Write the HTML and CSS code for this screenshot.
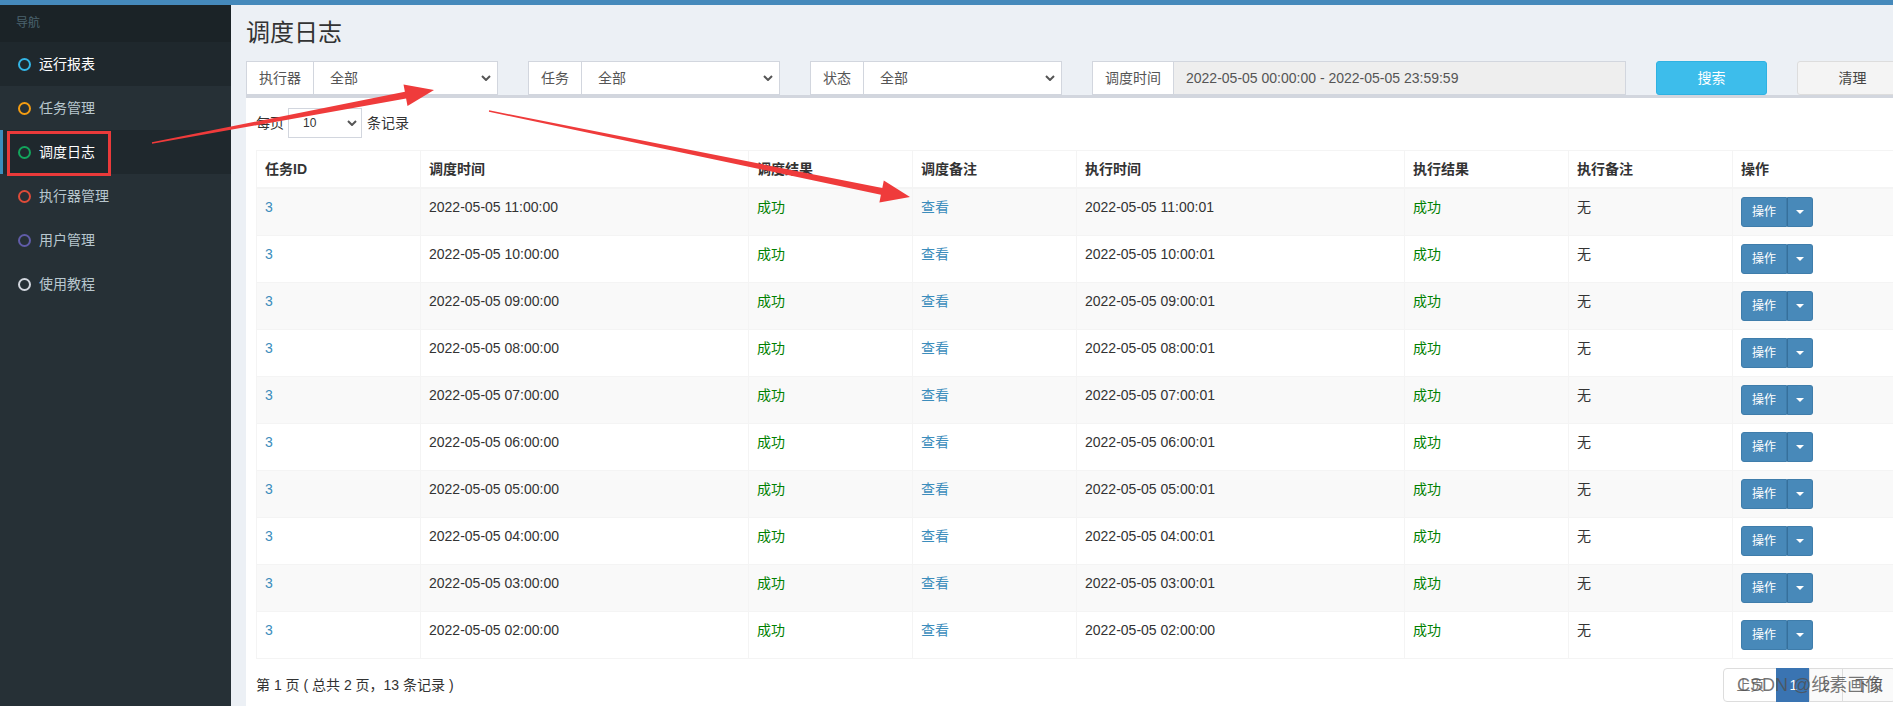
FILE: index.html
```html
<!DOCTYPE html>
<html lang="zh-CN">
<head>
<meta charset="utf-8">
<title>调度日志</title>
<link rel="stylesheet" href="styles.css">
</head>
<body>
<div class="topbar"></div>
<div class="layout">
  <aside class="sidebar">
    <div class="nav-header">导航</div>
    <ul class="menu">
      <li class="hl"><span class="dot c-aqua"></span>运行报表</li>
      <li><span class="dot c-yellow"></span>任务管理</li>
      <li class="active"><span class="dot c-green"></span>调度日志</li>
      <li><span class="dot c-red"></span>执行器管理</li>
      <li><span class="dot c-purple"></span>用户管理</li>
      <li><span class="dot c-gray"></span>使用教程</li>
    </ul>
  </aside>
  <main class="main">
    <div class="content-header"><h1>调度日志</h1></div>
    <section class="content">
      <div class="filters">
        <div class="col c2">
          <div class="input-group"><span class="addon">执行器</span><div class="select"><span>全部</span><svg class="chev" width="10" height="6" viewBox="0 0 10 6"><path d="M1 1 L5 5 L9 1" fill="none" stroke="#555" stroke-width="2"/></svg></div></div>
        </div>
        <div class="col c2">
          <div class="input-group"><span class="addon">任务</span><div class="select"><span>全部</span><svg class="chev" width="10" height="6" viewBox="0 0 10 6"><path d="M1 1 L5 5 L9 1" fill="none" stroke="#555" stroke-width="2"/></svg></div></div>
        </div>
        <div class="col c2">
          <div class="input-group"><span class="addon">状态</span><div class="select"><span>全部</span><svg class="chev" width="10" height="6" viewBox="0 0 10 6"><path d="M1 1 L5 5 L9 1" fill="none" stroke="#555" stroke-width="2"/></svg></div></div>
        </div>
        <div class="col c4">
          <div class="input-group"><span class="addon">调度时间</span><div class="readonly">2022-05-05 00:00:00 - 2022-05-05 23:59:59</div></div>
        </div>
        <div class="col c1"><button class="btn btn-info">搜索</button></div>
        <div class="col c1"><button class="btn btn-default">清理</button></div>
      </div>

      <div class="box">
        <div class="length">
          <span>每页</span>
          <div class="select sm"><span>10</span><svg class="chev" width="10" height="6" viewBox="0 0 10 6"><path d="M1 1 L5 5 L9 1" fill="none" stroke="#555" stroke-width="2"/></svg></div>
          <span>条记录</span>
        </div>
        <table class="grid">
          <colgroup>
            <col class="w10"><col class="w20"><col class="w10"><col class="w10"><col class="w20"><col class="w10"><col class="w10"><col class="w10">
          </colgroup>
          <thead>
            <tr><th>任务ID</th><th>调度时间</th><th>调度结果</th><th>调度备注</th><th>执行时间</th><th>执行结果</th><th>执行备注</th><th>操作</th></tr>
          </thead>
          <tbody>
            <tr><td class="link">3</td><td>2022-05-05 11:00:00</td><td class="ok">成功</td><td class="link">查看</td><td>2022-05-05 11:00:01</td><td class="ok">成功</td><td>无</td><td><div class="btn-group"><span class="op">操作</span><span class="tog"><i class="caret"></i></span></div></td></tr>
            <tr><td class="link">3</td><td>2022-05-05 10:00:00</td><td class="ok">成功</td><td class="link">查看</td><td>2022-05-05 10:00:01</td><td class="ok">成功</td><td>无</td><td><div class="btn-group"><span class="op">操作</span><span class="tog"><i class="caret"></i></span></div></td></tr>
            <tr><td class="link">3</td><td>2022-05-05 09:00:00</td><td class="ok">成功</td><td class="link">查看</td><td>2022-05-05 09:00:01</td><td class="ok">成功</td><td>无</td><td><div class="btn-group"><span class="op">操作</span><span class="tog"><i class="caret"></i></span></div></td></tr>
            <tr><td class="link">3</td><td>2022-05-05 08:00:00</td><td class="ok">成功</td><td class="link">查看</td><td>2022-05-05 08:00:01</td><td class="ok">成功</td><td>无</td><td><div class="btn-group"><span class="op">操作</span><span class="tog"><i class="caret"></i></span></div></td></tr>
            <tr><td class="link">3</td><td>2022-05-05 07:00:00</td><td class="ok">成功</td><td class="link">查看</td><td>2022-05-05 07:00:01</td><td class="ok">成功</td><td>无</td><td><div class="btn-group"><span class="op">操作</span><span class="tog"><i class="caret"></i></span></div></td></tr>
            <tr><td class="link">3</td><td>2022-05-05 06:00:00</td><td class="ok">成功</td><td class="link">查看</td><td>2022-05-05 06:00:01</td><td class="ok">成功</td><td>无</td><td><div class="btn-group"><span class="op">操作</span><span class="tog"><i class="caret"></i></span></div></td></tr>
            <tr><td class="link">3</td><td>2022-05-05 05:00:00</td><td class="ok">成功</td><td class="link">查看</td><td>2022-05-05 05:00:01</td><td class="ok">成功</td><td>无</td><td><div class="btn-group"><span class="op">操作</span><span class="tog"><i class="caret"></i></span></div></td></tr>
            <tr><td class="link">3</td><td>2022-05-05 04:00:00</td><td class="ok">成功</td><td class="link">查看</td><td>2022-05-05 04:00:01</td><td class="ok">成功</td><td>无</td><td><div class="btn-group"><span class="op">操作</span><span class="tog"><i class="caret"></i></span></div></td></tr>
            <tr><td class="link">3</td><td>2022-05-05 03:00:00</td><td class="ok">成功</td><td class="link">查看</td><td>2022-05-05 03:00:01</td><td class="ok">成功</td><td>无</td><td><div class="btn-group"><span class="op">操作</span><span class="tog"><i class="caret"></i></span></div></td></tr>
            <tr><td class="link">3</td><td>2022-05-05 02:00:00</td><td class="ok">成功</td><td class="link">查看</td><td>2022-05-05 02:00:00</td><td class="ok">成功</td><td>无</td><td><div class="btn-group"><span class="op">操作</span><span class="tog"><i class="caret"></i></span></div></td></tr>
          </tbody>
        </table>
        <div class="dt-footer">
          <div class="info">第 1 页 ( 总共 2 页，13 条记录 )</div>
          <ul class="pagination">
            <li class="disabled">上页</li>
            <li class="current">1</li>
            <li>2</li>
            <li>下页</li>
          </ul>
        </div>
      </div>
    </section>
  </main>
</div>

<div class="annot-box"></div>
<svg class="annot" width="1893" height="706" viewBox="0 0 1893 706">
  <polygon fill="#ef3b3b" points="152.1,143.8 406.1,98.6 407.5,106 434,90 403.5,84.4 404.9,91.8 151.9,142.3"/>
  <polygon fill="#ef3b3b" points="488.9,111.7 880.9,194.8 879.4,202.6 910,197 883.8,180.4 882.3,188 489.1,110.3"/>
</svg>
<div class="watermark">CSDN @纸素画像</div>
</body>
</html>
```

FILE: styles.css
```css
* { box-sizing: border-box; }

body {
  margin: 0;
  width: 1893px;
  height: 706px;
  overflow: hidden;
  position: relative;
  background: #ecf0f5;
  color: #333;
  font-family: "Liberation Sans", "Noto Sans CJK SC", sans-serif;
  font-size: 14px;
  line-height: 20px;
}

.topbar {
  height: 5px;
  background: #4589bb;
}

.layout {
  display: flex;
  height: 701px;
}

/* ---------- sidebar ---------- */
.sidebar {
  width: 231px;
  flex: none;
  background: #263036;
}

.nav-header {
  height: 37px;
  padding: 10px 25px 10px 16px;
  font-size: 12px;
  line-height: 17px;
  color: #4b646f;
  background: #1b2327;
}

.menu {
  list-style: none;
  margin: 0;
  padding: 0;
}

.menu li {
  height: 44px;
  padding: 12px 5px 12px 15px;
  border-left: 3px solid transparent;
  display: flex;
  align-items: center;
  color: #b8c7ce;
}

.menu li.hl {
  background: #1f282d;
  color: #fff;
}

.menu li.active {
  background: #1f282d;
  color: #fff;
  border-left-color: #3c8dbc;
}

.dot {
  width: 13px;
  height: 13px;
  border: 2px solid currentColor;
  border-radius: 50%;
  margin-right: 8px;
  flex: none;
}

.c-aqua { color: #33b5e5; }
.c-yellow { color: #f39c12; }
.c-green { color: #13a55c; }
.c-red { color: #dd4b39; }
.c-purple { color: #605ca8; }
.c-gray { color: #d2d6de; }

/* ---------- main ---------- */
.main {
  flex: none;
  width: 1722px;
}

.content-header {
  padding: 15px 15px 0;
}

.content-header h1 {
  margin: 0;
  font-size: 24px;
  line-height: 26px;
  font-weight: normal;
  color: #333;
}

.content {
  padding: 15px;
}

.filters {
  display: flex;
  margin: 0 -15px;
}

.col {
  flex: none;
  padding: 0 15px;
}

.c1 { width: 141px; }
.c2 { width: 282px; }
.c4 { width: 564px; }

.input-group {
  display: flex;
  height: 34px;
}

.addon {
  padding: 6px 12px;
  border: 1px solid #d2d6de;
  border-right: 0;
  background: #fff;
  color: #555;
  white-space: nowrap;
}

.select {
  flex: 1;
  display: flex;
  align-items: center;
  justify-content: space-between;
  border: 1px solid #d2d6de;
  background: #fff;
  padding: 0 6px 0 16px;
  color: #555;
}

.select.sm {
  flex: none;
  width: 74px;
  height: 30px;
  margin: 0 5px 0 4px;
  font-size: 12px;
  padding: 0 4px 0 14px;
  color: #333;
}

.readonly {
  flex: 1;
  border: 1px solid #d2d6de;
  background: #eee;
  padding: 6px 12px;
  color: #555;
  white-space: nowrap;
}

.btn {
  width: 100%;
  height: 34px;
  border-radius: 3px;
  font: inherit;
  padding: 6px 12px;
}

.btn-info {
  background: #3dbdeb;
  border: 1px solid #2fb2e2;
  color: #fff;
}

.btn-default {
  background: #f4f4f4;
  border: 1px solid #ddd;
  color: #444;
}

/* ---------- box ---------- */
.box {
  width: 1660px;
  background: #fff;
  border-top: 3px solid #d2d6de;
  padding: 10px;
}

.length {
  display: flex;
  align-items: center;
  height: 30px;
  margin-bottom: 12px;
}

.grid {
  width: 1640px;
  table-layout: fixed;
  border-collapse: collapse;
  border: 1px solid #f4f4f4;
}

.w10 { width: 164px; }
.w20 { width: 328px; }

.grid th,
.grid td {
  padding: 8px;
  border: 1px solid #f4f4f4;
  text-align: left;
  vertical-align: top;
  line-height: 20px;
  white-space: nowrap;
}

.grid thead th {
  border-bottom-width: 2px;
  font-weight: bold;
  color: #333;
}

.grid tbody tr:nth-child(odd) {
  background: #f9f9f9;
}

.link { color: #3c8dbc; }
.ok { color: #008000; }

.btn-group {
  display: flex;
  width: fit-content;
}

.op,
.tog {
  height: 30px;
  background: #4889b9;
  border: 1px solid #3f7dab;
  color: #fff;
  font-size: 12px;
  line-height: 18px;
}

.op {
  padding: 5px 10px;
  border-radius: 3px 0 0 3px;
}

.tog {
  width: 26px;
  border-left-color: #36709c;
  border-radius: 0 3px 3px 0;
  display: flex;
  align-items: center;
  justify-content: center;
}

.caret {
  width: 0;
  height: 0;
  border-top: 4px solid #fff;
  border-left: 4px solid transparent;
  border-right: 4px solid transparent;
}

.dt-footer {
  width: 1640px;
  margin-top: 9px;
  display: flex;
  justify-content: space-between;
  align-items: center;
}

.pagination {
  display: flex;
  list-style: none;
  margin: 0;
  padding: 0;
}

.pagination li {
  padding: 6px 12px;
  border: 1px solid #ddd;
  margin-left: -1px;
  background: #fafafa;
  color: #666;
}

.pagination li:first-child {
  border-radius: 4px 0 0 4px;
}

.pagination li:last-child {
  border-radius: 0 4px 4px 0;
}

.pagination li.disabled {
  background: #fff;
  color: #777;
}

.pagination li.current {
  background: #3a74b2;
  border-color: #3a74b2;
  color: #fff;
}

/* ---------- annotations (overlay) ---------- */
.annot-box {
  position: absolute;
  left: 7px;
  top: 131px;
  width: 104px;
  height: 45px;
  border: 3px solid #ea3a3a;
}

.annot {
  position: absolute;
  left: 0;
  top: 0;
  pointer-events: none;
}

.watermark {
  position: absolute;
  left: 1737px;
  top: 674px;
  font-size: 18px;
  line-height: 22px;
  color: rgba(80, 80, 80, 0.78);
  white-space: nowrap;
}
```
